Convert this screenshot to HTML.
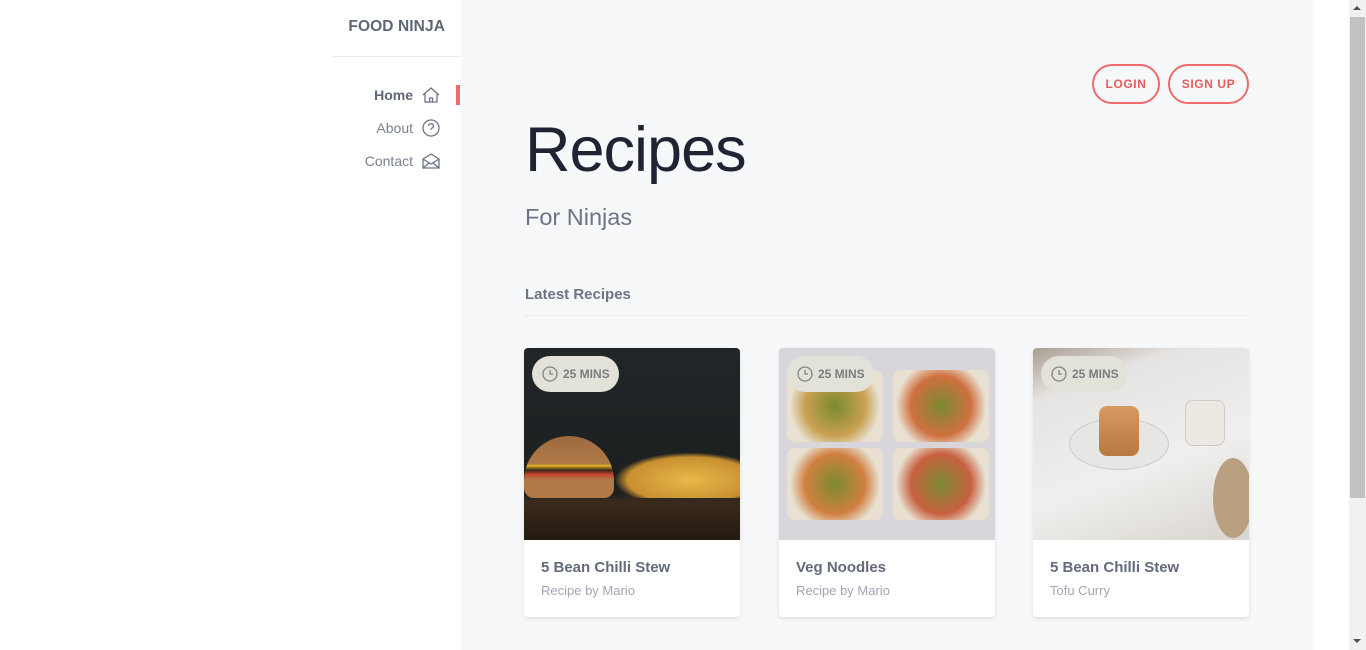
<!DOCTYPE html>
<html><head><style>
*{margin:0;padding:0;box-sizing:border-box}
body{width:1366px;height:650px;overflow:hidden;background:#fff;font-family:"Liberation Sans",sans-serif;position:relative}
.side{position:absolute;left:332px;top:0;width:129px;height:650px}
.logo{position:absolute;right:16px;top:18px;font-size:15.5px;font-weight:bold;color:#5f6675;letter-spacing:.1px}
.hr{position:absolute;left:0;right:0;top:56px;border-top:1px solid #ececec}
.nav{position:absolute;right:20px;font-size:14px;color:#7a8090;display:flex;align-items:center;gap:8px}
.nav svg{width:20px;height:20px}
.bar{position:absolute;left:456px;top:85px;width:4px;height:20px;background:#f06a6a}
.main{position:absolute;left:461px;top:0;width:852px;height:650px;background:#f7f8fa}
.btn{position:absolute;top:64px;height:40px;border:2px solid #f06a6a;border-radius:20px;color:#e85a5a;font-size:12px;font-weight:bold;letter-spacing:.6px;display:flex;align-items:center;justify-content:center}
h1{position:absolute;left:525px;top:114px;font-size:63px;font-weight:normal;color:#1f2333;letter-spacing:-1px}
.sub{position:absolute;left:525px;top:204px;font-size:23.5px;color:#6d7487}
.lat{position:absolute;left:525px;top:286px;font-size:15px;font-weight:bold;color:#6d7487}
.line{position:absolute;left:524px;width:725px;top:315px;border-top:1px solid #e9eaee}
.card{position:absolute;top:348px;width:216px;height:269px;background:#fff;border-radius:4px;box-shadow:0 2px 5px rgba(0,0,0,.1);overflow:hidden}
.img{height:192px;position:relative;overflow:hidden}
.tag{position:absolute;left:8px;top:8px;width:87px;height:36px;border-radius:18px;background:#e3e2d9;display:flex;align-items:center;gap:5px;padding-left:10px;font-size:12px;font-weight:bold;color:#7a7c80}
.t{position:absolute;left:17px;top:211px;font-size:15px;font-weight:bold;color:#636a7d}
.s{position:absolute;left:17px;top:235px;font-size:13px;color:#a0a6b4}
.sb{position:absolute;left:1349px;top:0;width:17px;height:650px;background:#f1f1f1}
.th{position:absolute;left:1px;top:17px;width:15px;height:481px;background:#c1c1c1}
.ar{position:absolute;left:4px;width:0;height:0;border-left:4px solid transparent;border-right:4px solid transparent}
</style></head><body>
<div class="side">
<div class="logo">FOOD NINJA</div><div class="hr"></div>
<div class="nav" style="top:85px;font-weight:bold;color:#5f6675">Home <svg viewBox="0 0 20 20" fill="none" stroke="#6d7487" stroke-width="1.3"><path d="M2 10L10 3l8 7M4 8.5V17h12V8.5M8.5 17v-4h3v4"/></svg></div>
<div class="nav" style="top:118px">About <svg viewBox="0 0 20 20" fill="none" stroke="#6d7487" stroke-width="1.3"><circle cx="10" cy="10" r="8"/><path d="M7.6 8a2.4 2.4 0 1 1 3.4 2.2c-.7.4-1 .8-1 1.6M10 14v.3"/></svg></div>
<div class="nav" style="top:151px">Contact <svg viewBox="0 0 20 20" fill="none" stroke="#6d7487" stroke-width="1.3"><path d="M2 8l8-5 8 5v9H2zM2 8l8 5 8-5M2 17l6-5M18 17l-6-5"/></svg></div>
</div>
<div class="bar"></div>
<div class="main"></div>
<div class="btn" style="left:1092px;width:68px">LOGIN</div>
<div class="btn" style="left:1168px;width:81px">SIGN UP</div>
<h1>Recipes</h1>
<div class="sub">For Ninjas</div>
<div class="lat">Latest Recipes</div>
<div class="line"></div>

<div class="card" style="left:524px"><div class="img" style="background:linear-gradient(#222628 0,#1c1f20 75%,#3a2a1c 80%,#241a12 100%)">
<div style="position:absolute;left:0;top:88px;width:90px;height:62px;border-radius:45px 45px 10px 10px;background:linear-gradient(#9b6a3e,#b07a48 45%,#e1b020 48%,#3a2620 55%,#c8442a 62%,#b07a48 70%)"></div>
<div style="position:absolute;left:92px;top:105px;width:124px;height:45px;background:radial-gradient(ellipse at 60% 60%,#e8b84a,#c89030 60%,transparent 72%)"></div>
</div><div class="tag"><svg width="16" height="16" viewBox="0 0 16 16" fill="none" stroke="#808286" stroke-width="1.3"><circle cx="8" cy="8" r="7"/><path d="M8 4v4h3"/></svg>25 MINS</div>
<div class="t">5 Bean Chilli Stew</div><div class="s">Recipe by Mario</div></div>

<div class="card" style="left:779px"><div class="img" style="background:#d8d6da">
<div style="position:absolute;left:8px;top:22px;width:96px;height:72px;border-radius:8px;background:radial-gradient(circle,#7a8a30,#c8a050 50%,#e8e0d0 75%)"></div>
<div style="position:absolute;left:114px;top:22px;width:96px;height:72px;border-radius:8px;background:radial-gradient(circle,#7a8a30,#d07040 50%,#e8e0d0 75%)"></div>
<div style="position:absolute;left:8px;top:100px;width:96px;height:72px;border-radius:8px;background:radial-gradient(circle,#7a8a30,#d08040 50%,#e8e0d0 75%)"></div>
<div style="position:absolute;left:114px;top:100px;width:96px;height:72px;border-radius:8px;background:radial-gradient(circle,#7a8a30,#c86040 50%,#e8e0d0 75%)"></div>
</div><div class="tag"><svg width="16" height="16" viewBox="0 0 16 16" fill="none" stroke="#808286" stroke-width="1.3"><circle cx="8" cy="8" r="7"/><path d="M8 4v4h3"/></svg>25 MINS</div>
<div class="t">Veg Noodles</div><div class="s">Recipe by Mario</div></div>

<div class="card" style="left:1033px"><div class="img" style="background:linear-gradient(160deg,#a89c90 0,#e6e4e2 20%,#f0efed 60%,#d8d4cf 100%)">
<div style="position:absolute;left:36px;top:70px;width:100px;height:52px;border-radius:50%;background:#e8e6e4;border:1px solid #ccc"></div>
<div style="position:absolute;left:66px;top:58px;width:40px;height:50px;border-radius:8px;background:linear-gradient(#d89a60,#b87840)"></div>
<div style="position:absolute;left:152px;top:52px;width:40px;height:46px;border-radius:8px;background:#ece8e2;border:1px solid #ccc"></div>
<div style="position:absolute;left:180px;top:110px;width:40px;height:80px;border-radius:50%;background:#b8a080"></div>
</div><div class="tag"><svg width="16" height="16" viewBox="0 0 16 16" fill="none" stroke="#808286" stroke-width="1.3"><circle cx="8" cy="8" r="7"/><path d="M8 4v4h3"/></svg>25 MINS</div>
<div class="t">5 Bean Chilli Stew</div><div class="s">Tofu Curry</div></div>

<div class="sb"><div class="ar" style="top:6px;border-bottom:4px solid #505050"></div><div class="th"></div><div class="ar" style="top:639px;border-top:4px solid #505050"></div></div>
</body></html>
